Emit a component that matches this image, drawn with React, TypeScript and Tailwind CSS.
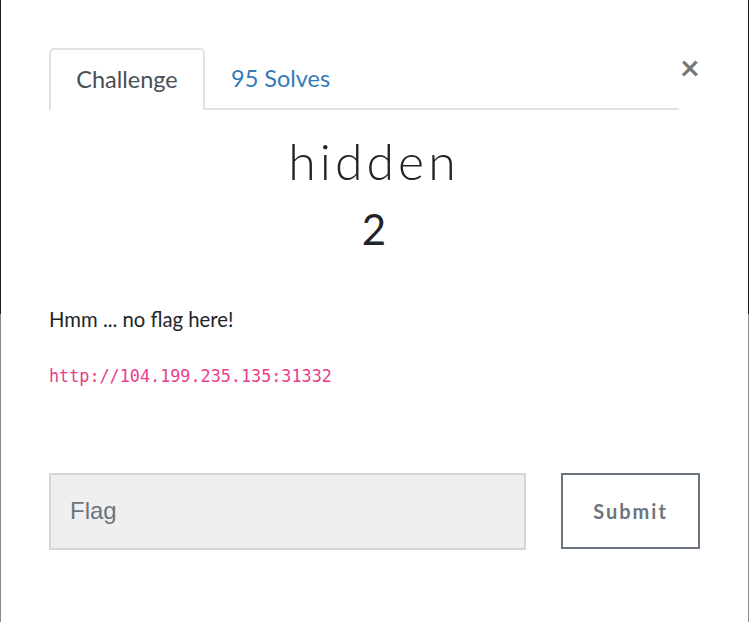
import React from 'react';

const lato = { fontFamily: 'Lato, "Open Sans", sans-serif' };

const ChallengeModal = () => {
  return (
    <div className="w-[749px] h-[622px] px-px bg-[linear-gradient(to_bottom,#1c1c1c_0,#1c1c1c_314px,#8a8a8a_314px,#8a8a8a_100%)]">
      <div className="h-full bg-white pl-[48px] pt-[48px]" style={lato}>
        {/* 탭 + 닫기 버튼 */}
        <div className="flex items-start">
          <div className="flex w-[630px] border-b-2 border-[#dee2e6]">
            <div className="-mb-[2px] flex h-[62px] w-[156px] items-center justify-center rounded-t-[5px] border-2 border-b-0 border-[#dee2e6] bg-white text-[23.5px] text-[#495057]">
              Challenge
            </div>
            <div className="flex h-[60px] items-center pl-[26px] pt-[2px] text-[23.5px] text-[#337ab7]">
              95 Solves
            </div>
          </div>
          <button className="ml-px mt-[2px] text-[34px] font-bold leading-none text-[#777]">
            ×
          </button>
        </div>

        {/* 제목 */}
        <div className="w-[650px] pt-[20px] text-center text-[#212529]">
          <h3 className="text-[50px] font-light leading-[62px] tracking-[4px]">hidden</h3>
          <div className="mt-[12px] text-[42px] leading-[50px]">2</div>
        </div>

        <p className="mt-[50px] text-[20.3px] text-[#212529]">Hmm ... no flag here!</p>
        <p
          className="mt-[30px] text-[16.8px] text-[#e83e8c]"
          style={{ fontFamily: '"DejaVu Sans Mono", "Liberation Mono", monospace' }}
        >
          http://104.199.235.135:31332
        </p>

        {/* 플래그 입력 */}
        <div className="mt-[83px] flex items-start">
          <input
            placeholder="Flag"
            className="h-[77px] w-[477px] border-2 border-[#d3d6d9] bg-[#efefef] px-[19px] text-[24px] text-[#495057] placeholder:text-[#6c757d] focus:outline-none"
            style={{ fontFamily: '"Liberation Sans", Arial, sans-serif' }}
          />
          <button className="ml-[35px] h-[76px] w-[139px] border-2 border-[#6c757d] text-[20px] font-bold tracking-[2px] text-[#6c757d]">
            Submit
          </button>
        </div>
      </div>
    </div>
  );
};

export default function App() {
  return <ChallengeModal />;
}
